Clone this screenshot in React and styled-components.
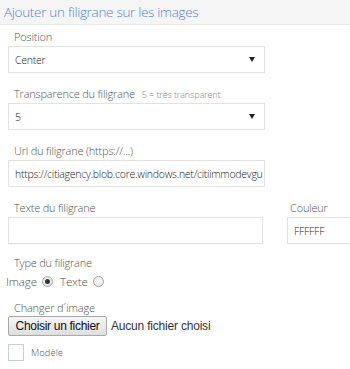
import React from 'react'
import styled, { createGlobalStyle } from 'styled-components'

const Global = createGlobalStyle`
  html, body {
    margin: 0;
    padding: 0;
    background: #fff;
  }
  body {
    font-family: "Open Sans", "Liberation Sans", sans-serif;
    color: #555;
    overflow: hidden;
  }
`

const Panel = styled.div`
  width: 350px;
  height: 369px;
  overflow: hidden;
`

const Header = styled.div`
  height: 24px;
  background: #f5f5f5;
  border-bottom: 1px solid #e8e8e8;
  padding-left: 4px;
  display: flex;
  align-items: center;
  color: #5684cc;
  font-size: 13.5px;
  font-weight: 300;
  letter-spacing: -0.3px;
`

const Body = styled.div`
  padding: 3px 0 0 8px;
`

const Group = styled.div`
  width: ${({ width }) => width || 257}px;
  margin-bottom: ${({ gap }) => (gap === undefined ? 12 : gap)}px;
  flex-shrink: 0;
`

const Label = styled.div`
  padding-left: ${({ inset }) => (inset === undefined ? 6 : inset)}px;
  height: 17px;
  line-height: 17px;
  margin-bottom: 1px;
  font-size: 11px;
  font-weight: 300;
  letter-spacing: -0.2px;
  color: #555;
  white-space: nowrap;
`

const Hint = styled.span`
  margin-left: 7px;
  font-size: 9px;
  letter-spacing: -0.1px;
  color: #888;
`

const Box = styled.div`
  box-sizing: border-box;
  height: 27px;
  border: 1px solid #e2e2e2;
  background: #fff;
  display: flex;
  align-items: center;
  padding: 0 6px;
  font-size: 10.5px;
  font-weight: 300;
  letter-spacing: -0.25px;
  color: #222;
  white-space: nowrap;
  overflow: hidden;
`

const SelectBox = styled(Box)`
  justify-content: space-between;
  padding-right: 9px;
`

const Caret = styled.span`
  width: 0;
  height: 0;
  border-left: 3px solid transparent;
  border-right: 3px solid transparent;
  border-top: 5px solid #222;
`

const Row = styled.div`
  display: flex;
  gap: 24px;
`

const RadioRow = styled.div`
  display: flex;
  align-items: center;
  height: 18px;
  margin-left: -2px;
  margin-bottom: 9px;
  font-size: 11.5px;
  font-weight: 300;
  letter-spacing: -0.1px;
  color: #555;
`

const Radio = styled.span`
  box-sizing: border-box;
  width: 11px;
  height: 11px;
  border-radius: 50%;
  border: 1px solid #a8a8a8;
  background: radial-gradient(circle at 50% 40%, #fdfdfd, #dcdcdc);
  margin: 0 7px 0 5px;
  display: inline-flex;
  align-items: center;
  justify-content: center;
  &::after {
    content: '';
    width: 5px;
    height: 5px;
    border-radius: 50%;
    background: ${({ checked }) => (checked ? '#333' : 'transparent')};
  }
`

const FileRow = styled.div`
  display: flex;
  align-items: center;
  gap: 4px;
  margin-top: -1px;
  margin-bottom: 8px;
  font-family: "Liberation Sans", Arial, sans-serif;
  font-size: 12px;
  letter-spacing: -0.2px;
  color: #333;
`

const FileButton = styled.button`
  box-sizing: border-box;
  height: 20px;
  width: 99px;
  padding: 0;
  border: 1px solid #a9a9a9;
  border-radius: 2px;
  background: linear-gradient(#f6f6f6, #dedede);
  font-family: inherit;
  font-size: 12px;
  letter-spacing: -0.3px;
  color: #111;
`

const CheckRow = styled.div`
  display: flex;
  align-items: center;
  gap: 7px;
  font-size: 9.5px;
  font-weight: 300;
  color: #555;
`

const Check = styled.span`
  box-sizing: border-box;
  width: 16px;
  height: 17px;
  border: 1px solid #c6ced6;
  background: #fff;
`

export default function App() {
  return (
    <Panel>
      <Global />
      <Header>Ajouter un filigrane sur les images</Header>
      <Body>
        <Group>
          <Label>Position</Label>
          <SelectBox>Center<Caret /></SelectBox>
        </Group>
        <Group>
          <Label>Transparence du filigrane<Hint>5 = très transparent</Hint></Label>
          <SelectBox>5<Caret /></SelectBox>
        </Group>
        <Group>
          <Label>Url du filigrane (https://...)</Label>
          <Box>https://citiagency.blob.core.windows.net/citiimmodevgu</Box>
        </Group>
        <Row>
          <Group width={255} gap={10}>
            <Label>Texte du filigrane</Label>
            <Box />
          </Group>
          <Group width={80} gap={10}>
            <Label inset={3}>Couleur</Label>
            <Box>FFFFFF</Box>
          </Group>
        </Row>
        <Label>Type du filigrane</Label>
        <RadioRow>
          Image<Radio checked />Texte<Radio />
        </RadioRow>
        <Label>Changer d´image</Label>
        <FileRow>
          <FileButton type="button">Choisir un fichier</FileButton>
          Aucun fichier choisi
        </FileRow>
        <CheckRow>
          <Check />
          Modèle
        </CheckRow>
      </Body>
    </Panel>
  )
}
